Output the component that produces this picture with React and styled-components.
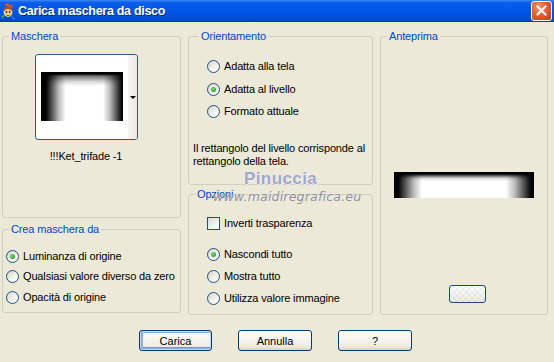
import React from "react";
import styled, { createGlobalStyle, css } from "styled-components";

const Global = createGlobalStyle`
  html, body { margin: 0; padding: 0; background: #ECE9D8; }
  body { font-family: "Liberation Sans", Arial, sans-serif; font-size: 11px; letter-spacing: -0.15px; color: #000; }
  #root { width: 554px; height: 362px; overflow: hidden; }
`;

const Window = styled.div`
  position: relative;
  width: 554px;
  height: 362px;
  background: #ECE9D8;
  display: flex;
  flex-direction: column;
`;

const TitleBar = styled.div`
  height: 22px;
  flex: none;
  display: flex;
  align-items: center;
  padding: 0 2px 0 1px;
  background: linear-gradient(to bottom, #3D88F5 0%, #0A5EEB 12%, #0058E6 40%, #0052DE 70%, #004BD4 88%, #003CB4 100%);
  box-sizing: border-box;
`;

const TitleText = styled.span`
  margin-left: 2px;
  color: #fff;
  font-family: "Liberation Sans", Arial, sans-serif;
  font-weight: bold;
  font-size: 12.5px;
  letter-spacing: -0.3px;
  text-shadow: 1px 1px 0 #0A2A8A;
  flex: 1;
`;

const CloseBtn = styled.div`
  width: 21px;
  height: 20px;
  margin-top: -1px;
  box-sizing: border-box;
  border: 1px solid #fff;
  border-radius: 3px;
  background: radial-gradient(circle at 35% 30%, #F09070 0%, #E2562E 55%, #C23A12 100%);
  display: flex;
  align-items: center;
  justify-content: center;
`;

const Body = styled.div`
  display: flex;
  flex-direction: column;
  padding: 8px 0 0 2px;
`;

const Columns = styled.div`
  display: grid;
  grid-template-columns: 179px 185px 168px;
  column-gap: 7px;
  align-items: start;
`;

const Column = styled.div`
  display: flex;
  flex-direction: column;
  gap: ${p => p.gap}px;
`;

const Group = styled.fieldset`
  margin: 0;
  box-sizing: border-box;
  height: ${p => p.h}px;
  border: 1px solid #D0D0BF;
  border-radius: 3px;
  padding: 0 0 0 ${p => p.pl || 0}px;
  min-width: 0;
  display: flex;
  flex-direction: column;
`;

const Legend = styled.legend`
  margin-left: 6px;
  padding: 0 2px;
  color: #0046D5;
  font-size: 11px;
  line-height: 13px;
`;

const Centered = styled.div`
  display: flex;
  flex-direction: column;
  align-items: center;
  padding-right: 11px;
`;

const Thumb = styled.div`
  margin-top: 11px;
  width: 103px;
  height: 86px;
  box-sizing: border-box;
  border: 1px solid #2A5A8C;
  border-radius: 3px;
  background: #fff;
  display: flex;
  overflow: hidden;
`;

const ThumbMain = styled.div`
  width: 92px;
  padding: 17px 0 0 5px;
  box-sizing: border-box;
`;

const MaskImage = styled.div`
  width: ${p => p.w}px;
  height: ${p => p.h}px;
  background:
    linear-gradient(to bottom, #000 0px, #000 ${p => p.top}px, rgba(0,0,0,0.55) ${p => p.top + 2}px, rgba(0,0,0,0.15) ${p => p.fade * 0.7}px, rgba(0,0,0,0) ${p => p.fade}px),
    linear-gradient(to right,
      #000 0%, #000 ${p => p.l0}%,
      #555 ${p => p.l0 + (p.l1 - p.l0) * 0.3}%,
      #bbb ${p => p.l0 + (p.l1 - p.l0) * 0.65}%,
      #fff ${p => p.l1}%, #fff ${p => p.r1}%,
      #bbb ${p => p.r1 + (p.r0 - p.r1) * 0.35}%,
      #555 ${p => p.r1 + (p.r0 - p.r1) * 0.7}%,
      #000 ${p => p.r0}%, #000 100%);
`;

const ThumbStrip = styled.div`
  flex: 1;
  background: linear-gradient(to right, #F6F5F1, #EAE8E0);
  display: flex;
  align-items: center;
  justify-content: center;
`;

const Arrow = styled.span`
  width: 0;
  height: 0;
  border-left: 3px solid transparent;
  border-right: 3px solid transparent;
  border-top: 3px solid #000;
  margin-left: 1px;
`;

const MaskName = styled.div`
  margin-top: 10px;
  line-height: 13px;
`;

const RadioList = styled.div`
  display: flex;
  flex-direction: column;
  gap: ${p => p.gap}px;
  padding: ${p => p.pt}px 0 0 ${p => p.pl}px;
`;

const OptionRow = styled.label`
  display: flex;
  align-items: center;
  gap: 4px;
  height: 15px;
  line-height: 13px;
  white-space: nowrap;
`;

const RadioCircle = styled.span`
  position: relative;
  flex: none;
  width: 13px;
  height: 13px;
  box-sizing: border-box;
  border-radius: 50%;
  border: 1px solid #1C5180;
  background: linear-gradient(135deg, #D6D3C8 0%, #EDECE6 45%, #FFFFFF 85%);
  ${p => p.checked && css`
    &::after {
      content: "";
      position: absolute;
      left: 3px;
      top: 3px;
      width: 5px;
      height: 5px;
      border-radius: 50%;
      background: radial-gradient(circle at 40% 40%, #7EE07A 0%, #2FB02B 60%, #1E8E1E 100%);
    }
  `}
`;

const CheckBox = styled.span`
  flex: none;
  width: 13px;
  height: 13px;
  box-sizing: border-box;
  border: 1px solid #1C5180;
  background: linear-gradient(135deg, #DCDAD0 0%, #F2F1EC 55%, #FFFFFF 100%);
`;

const Desc = styled.div`
  margin-top: 23px;
  line-height: 13px;
`;

const Preview = styled.div`
  margin-top: 129px;
  align-self: center;
`;

const SmallBtn = styled.div`
  margin-top: 87px;
  margin-left: 68px;
  width: 37px;
  height: 18px;
  box-sizing: border-box;
  border: 1px solid #1C4A7C;
  border-radius: 3px;
  background:
    repeating-conic-gradient(#FFFFFF 0% 25%, #F1F1EE 0% 50%) 50% 50% / 6px 6px,
    linear-gradient(#fff, #ECECE8);
  background-blend-mode: multiply;
`;

const ButtonRow = styled.div`
  display: flex;
  gap: 26px;
  margin-top: 15px;
  padding-left: 137px;
`;

const Button = styled.button`
  width: ${p => p.w || 74}px;
  height: 21px;
  box-sizing: border-box;
  border: 1px solid #003C74;
  border-radius: 3px;
  background: linear-gradient(to bottom, #FFFFFF 0%, #F6F5F1 40%, #ECEBE5 80%, #D8D3C6 100%);
  font-family: "Liberation Sans", Arial, sans-serif;
  font-size: 11px;
  color: #000;
  padding: 0;
  ${p => p.primary && css`
    box-shadow: inset 0 0 0 1px #C2D6F4, inset 1px 0 0 2px #8AAEEA, inset 0 -2px 0 1px #6F98E4;
  `}
`;

const Watermark = styled.div`
  position: absolute;
  left: ${p => p.x}px;
  top: ${p => p.y}px;
  pointer-events: none;
  white-space: nowrap;
`;

const WmBig = styled.span`
  font-family: "Liberation Sans", sans-serif;
  font-weight: bold;
  font-size: 17px;
  letter-spacing: 0.4px;
  color: #A2A7C8;
  text-shadow: 0 0 1px #fff, 1px 1px 0 #E6E6EE;
`;

const WmSmall = styled.span`
  font-family: "DejaVu Sans", sans-serif;
  font-style: italic;
  font-size: 12.5px;
  letter-spacing: 0.2px;
  color: #8A8D9E;
  text-shadow: 0 0 1px #fff;
`;

function Radio({ checked, children }) {
  return (
    <OptionRow>
      <RadioCircle checked={checked} />
      <span>{children}</span>
    </OptionRow>
  );
}

function AppIcon() {
  return (
    <svg width="15" height="17" viewBox="0 0 15 17">
      <path d="M3 2 L7 0 L9 3 L12 1 L11 5 Z" fill="#E85A1A" />
      <ellipse cx="7" cy="9" rx="4.5" ry="5" fill="#F8D27A" />
      <path d="M2.5 6 Q7 1 11.5 6 L11 8 Q7 4 3 8 Z" fill="#C0461A" />
      <circle cx="5.5" cy="9" r="0.9" fill="#1A2A6A" />
      <circle cx="8.7" cy="9" r="0.9" fill="#1A2A6A" />
      <path d="M5.5 12 Q7 13.2 8.7 12" stroke="#B03010" strokeWidth="0.9" fill="none" />
      <path d="M10 12 L14 16 L13 17 L9.5 13 Z" fill="#3A7AE0" />
      <path d="M0 13 L3 12 L2 16 Z" fill="#40B040" />
    </svg>
  );
}

export default function App() {
  return (
    <>
      <Global />
      <Window>
        <TitleBar>
          <AppIcon />
          <TitleText>Carica maschera da disco</TitleText>
          <CloseBtn>
            <svg width="11" height="11" viewBox="0 0 11 11">
              <path d="M1.5 1.5 L9.5 9.5 M9.5 1.5 L1.5 9.5" stroke="#fff" strokeWidth="2" strokeLinecap="square" />
            </svg>
          </CloseBtn>
        </TitleBar>
        <Body>
          <Columns>
            <Column gap={5}>
              <Group h={188}>
                <Legend>Maschera</Legend>
                <Centered>
                  <Thumb>
                    <ThumbMain>
                      <MaskImage w={82} h={49} top={2} fade={14} l0={6} l1={30} r1={76} r0={99} />
                    </ThumbMain>
                    <ThumbStrip>
                      <Arrow />
                    </ThumbStrip>
                  </Thumb>
                  <MaskName>!!!Ket_trifade -1</MaskName>
                </Centered>
              </Group>
              <Group h={90}>
                <Legend>Crea maschera da</Legend>
                <RadioList gap={5.5} pt={12.5} pl={3}>
                  <Radio checked>Luminanza di origine</Radio>
                  <Radio>Qualsiasi valore diverso da zero</Radio>
                  <Radio>Opacità di origine</Radio>
                </RadioList>
              </Group>
            </Column>
            <Column gap={3}>
              <Group h={155} pl={4}>
                <Legend>Orientamento</Legend>
                <RadioList gap={7.5} pt={16} pl={14}>
                  <Radio>Adatta alla tela</Radio>
                  <Radio checked>Adatta al livello</Radio>
                  <Radio>Formato attuale</Radio>
                </RadioList>
                <Desc>
                  Il rettangolo del livello corrisponde al
                  <br />
                  rettangolo della tela.
                </Desc>
              </Group>
              <Group h={127}>
                <Legend>Opzioni</Legend>
                <RadioList gap={0} pt={14.5} pl={18}>
                  <OptionRow>
                    <CheckBox />
                    <span>Inverti trasparenza</span>
                  </OptionRow>
                </RadioList>
                <RadioList gap={7} pt={16} pl={18}>
                  <Radio checked>Nascondi tutto</Radio>
                  <Radio>Mostra tutto</Radio>
                  <Radio>Utilizza valore immagine</Radio>
                </RadioList>
              </Group>
            </Column>
            <Column gap={0}>
              <Group h={285}>
                <Legend>Anteprima</Legend>
                <Preview>
                  <MaskImage w={140} h={26} top={2} fade={9} l0={3} l1={20} r1={80} r0={98} />
                </Preview>
                <SmallBtn />
              </Group>
            </Column>
          </Columns>
          <ButtonRow>
            <Button primary w={73}>Carica</Button>
            <Button>Annulla</Button>
            <Button>?</Button>
          </ButtonRow>
        </Body>
        <Watermark x={244} y={169}><WmBig>Pinuccia</WmBig></Watermark>
        <Watermark x={213} y={189}><WmSmall>www.maidiregrafica.eu</WmSmall></Watermark>
      </Window>
    </>
  );
}
